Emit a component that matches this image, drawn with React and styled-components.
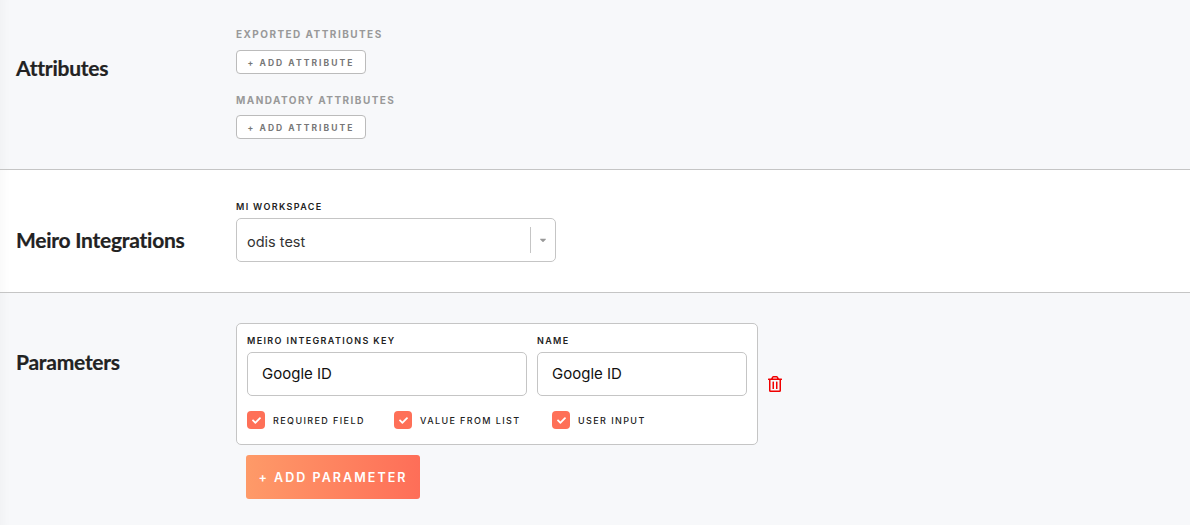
import React from "react";
import styled, { createGlobalStyle } from "styled-components";
import { FaRegTrashAlt, FaCheck, FaCaretDown } from "react-icons/fa";

const GlobalStyle = createGlobalStyle`
  html, body {
    margin: 0;
    padding: 0;
    background: #f7f8fa;
    font-family: Inter, "Liberation Sans", sans-serif;
    overflow: hidden;
  }
  * {
    box-sizing: border-box;
  }
`;

const Section = styled.section`
  display: flex;
  align-items: flex-start;
  height: ${(p) => p.$height}px;
  padding: ${(p) => p.$top}px 0 0 16px;
  background: ${(p) => (p.$white ? "#fff" : "#f7f8fa")};
  border-bottom: ${(p) => (p.$last ? "none" : "1px solid #c5c5c5")};
  box-shadow: inset 14px 0 12px -12px rgba(0, 0, 0, 0.035);
`;

const Title = styled.h2`
  width: 220px;
  flex: none;
  margin: ${(p) => p.$top}px 0 0;
  font-family: Lato, sans-serif;
  font-size: 21px;
  line-height: 26px;
  font-weight: 700;
  letter-spacing: -0.25px;
  color: #222222;
  -webkit-text-stroke: 0.2px #222222;
`;

const Column = styled.div`
  display: flex;
  flex-direction: column;
`;

const MutedLabel = styled.div`
  font-size: 10px;
  line-height: 12px;
  font-weight: 700;
  letter-spacing: 1.45px;
  color: #999999;
  margin-top: ${(p) => p.$top || 0}px;
`;

const SmallButton = styled.button`
  width: 130px;
  height: 24px;
  margin-top: ${(p) => p.$top}px;
  padding: 1px 0 0;
  background: #fff;
  border: 1px solid #bbbbbb;
  border-radius: 4px;
  font-family: inherit;
  font-size: 8.5px;
  font-weight: 700;
  letter-spacing: 2.05px;
  color: #777777;
`;

const FieldLabel = styled.label`
  display: block;
  font-size: 9px;
  line-height: 11px;
  font-weight: 600;
  letter-spacing: 1.35px;
  color: #222222;
  margin-bottom: 6px;
`;

const SelectBox = styled.div`
  display: flex;
  align-items: center;
  width: 320px;
  height: 44px;
  padding-left: 10px;
  background: #fff;
  border: 1px solid #c5c5c5;
  border-radius: 5px;
  font-size: 14.5px;
  color: #333;
`;

const SelectValue = styled.span`
  flex: 1;
  padding-top: 2px;
`;

const SelectDivider = styled.span`
  width: 1px;
  height: 26px;
  background: #c5c5c5;
`;

const Caret = styled.span`
  display: flex;
  justify-content: center;
  width: 24px;
  font-size: 10px;
  color: #999;
`;

const ParamRow = styled.div`
  display: flex;
  align-items: center;
`;

const ParamCard = styled.div`
  width: 522px;
  height: 122px;
  padding: 11px 10px 0;
  background: #fff;
  border: 1px solid #c5c5c5;
  border-radius: 5px;
`;

const InputRow = styled.div`
  display: flex;
  gap: 10px;
`;

const TextInput = styled.div`
  display: flex;
  align-items: center;
  width: ${(p) => p.$width}px;
  height: 44px;
  padding: 0 0 1px 14px;
  background: #fff;
  border: 1px solid #c5c5c5;
  border-radius: 5px;
  font-size: 15px;
  color: #111;
`;

const CheckRow = styled.div`
  display: flex;
  margin-top: 15px;
`;

const CheckItem = styled.div`
  display: flex;
  align-items: center;
  gap: 8px;
  width: ${(p) => p.$width}px;
  font-size: 9px;
  font-weight: 500;
  letter-spacing: 1.4px;
  color: #222;
`;

const CheckBox = styled.span`
  display: flex;
  align-items: center;
  justify-content: center;
  width: 18px;
  height: 18px;
  flex: none;
  background: #fe7058;
  border-radius: 4px;
  color: #fff;
  font-size: 9px;
`;

const TrashButton = styled.span`
  display: flex;
  margin-left: 9px;
  color: #f00000;
  font-size: 16px;
`;

const AddButton = styled.button`
  width: 174px;
  height: 44px;
  margin: 10px 0 0 10px;
  padding: 0;
  border: none;
  border-radius: 3px;
  background: linear-gradient(90deg, #fe9a68, #fe6e58);
  font-family: inherit;
  font-size: 12.5px;
  font-weight: 600;
  letter-spacing: 2.05px;
  color: #fff;
`;

const App = () => {
  return (
    <>
      <GlobalStyle />
      <Section $height={170} $top={28}>
        <Title $top={27}>Attributes</Title>
        <Column>
          <MutedLabel>EXPORTED ATTRIBUTES</MutedLabel>
          <SmallButton $top={10}>+ ADD ATTRIBUTE</SmallButton>
          <MutedLabel $top={20}>MANDATORY ATTRIBUTES</MutedLabel>
          <SmallButton $top={9}>+ ADD ATTRIBUTE</SmallButton>
        </Column>
      </Section>
      <Section $height={123} $white $top={31}>
        <Title $top={26}>Meiro Integrations</Title>
        <Column>
          <FieldLabel>MI WORKSPACE</FieldLabel>
          <SelectBox>
            <SelectValue>odis test</SelectValue>
            <SelectDivider />
            <Caret>
              <FaCaretDown />
            </Caret>
          </SelectBox>
        </Column>
      </Section>
      <Section $height={232} $last $top={30}>
        <Title $top={26}>Parameters</Title>
        <Column>
          <ParamRow>
            <ParamCard>
              <InputRow>
                <div>
                  <FieldLabel>MEIRO INTEGRATIONS KEY</FieldLabel>
                  <TextInput $width={280}>Google ID</TextInput>
                </div>
                <div>
                  <FieldLabel>NAME</FieldLabel>
                  <TextInput $width={210}>Google ID</TextInput>
                </div>
              </InputRow>
              <CheckRow>
                <CheckItem $width={147}>
                  <CheckBox>
                    <FaCheck />
                  </CheckBox>
                  REQUIRED FIELD
                </CheckItem>
                <CheckItem $width={158}>
                  <CheckBox>
                    <FaCheck />
                  </CheckBox>
                  VALUE FROM LIST
                </CheckItem>
                <CheckItem $width={110}>
                  <CheckBox>
                    <FaCheck />
                  </CheckBox>
                  USER INPUT
                </CheckItem>
              </CheckRow>
            </ParamCard>
            <TrashButton>
              <FaRegTrashAlt />
            </TrashButton>
          </ParamRow>
          <AddButton>+ ADD PARAMETER</AddButton>
        </Column>
      </Section>
    </>
  );
};

export default App;
